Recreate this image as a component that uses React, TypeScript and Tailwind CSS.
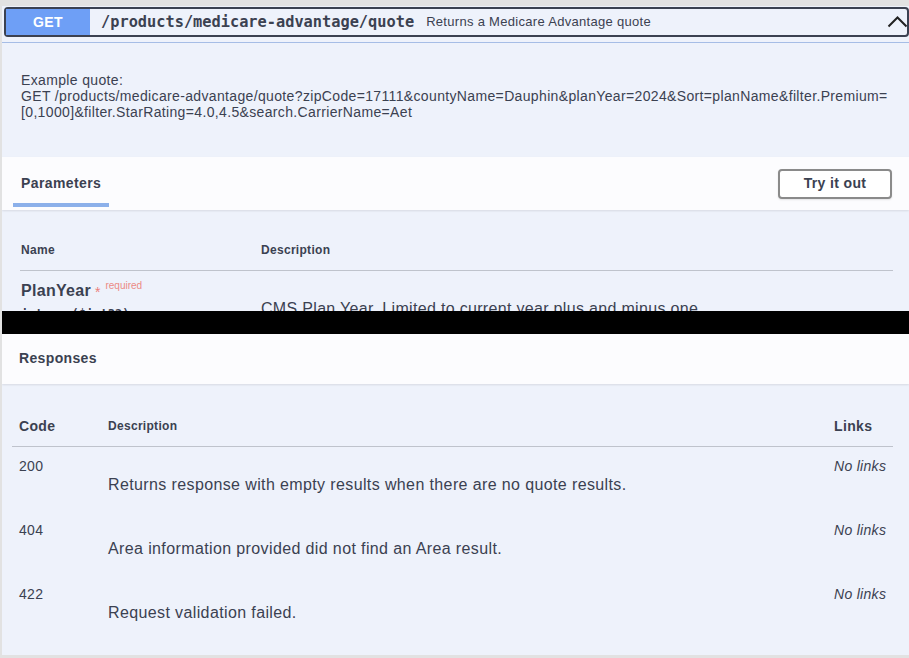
export default function App() {
  const rows = [
    { code: "200", desc: "Returns response with empty results when there are no quote results." },
    { code: "404", desc: "Area information provided did not find an Area result." },
    { code: "422", desc: "Request validation failed." },
  ];
  return (
    <div className="w-[909px] h-[658px] bg-[#e2e2e2] pt-[6px] pl-[2px] overflow-hidden font-['Liberation_Sans',Arial,sans-serif] text-[#3b4151]">
      <div className="h-[649px] bg-[#eef2fb] flex flex-col overflow-hidden">
        {/* summary */}
        <div className="h-[37px] shrink-0 border-b border-[#a6bde6] pt-[1px] pl-[2px]">
          <div className="h-[30px] border-2 border-[#3b4151] rounded-[4px] flex items-stretch">
            <div className="w-[84px] bg-[#6e9ff6] flex items-center justify-center text-white font-bold text-[14px] tracking-[0.4px]">
              GET
            </div>
            <span className="ml-[11px] self-center font-['DejaVu_Sans_Mono',monospace] font-bold text-[15.3px] leading-[18px] text-[#3b4151]">
              /products/medicare-advantage/quote
            </span>
            <span className="ml-[12px] self-center text-[13px] leading-[16px] tracking-[0.3px]">
              Returns a Medicare Advantage quote
            </span>
            <svg className="ml-auto self-center" width="20" height="12" viewBox="0 0 20 12" fill="none">
              <path d="M1.5 10.5 L10.5 1.5 L19.5 10.5" stroke="#222" strokeWidth="2" />
            </svg>
          </div>
        </div>

        {/* description */}
        <div className="h-[114px] shrink-0 pt-[29px] pl-[19px] text-[14px] leading-[16px] tracking-[0.35px]">
          Example quote:
          <br />
          GET /products/medicare-advantage/quote?zipCode=17111&amp;countyName=Dauphin&amp;planYear=2024&amp;Sort=planName&amp;filter.Premium=
          <br />
          [0,1000]&amp;filter.StarRating=4.0,4.5&amp;search.CarrierName=Aet
        </div>

        {/* parameters header */}
        <div className="h-[53px] shrink-0 bg-white/80 shadow-[0_1px_2px_rgba(0,0,0,0.1)] flex items-center justify-between pl-[11px] pr-[17px] relative z-10">
          <div className="h-full flex flex-col">
            <div className="pt-[18px] px-[8px] text-[14px] leading-[16px] font-bold tracking-[0.4px]">Parameters</div>
            <div className="mt-[12px] h-[4px] bg-[#8cb0ea]" />
          </div>
          <button className="w-[114px] h-[30px] border-2 border-[#8a8a8a] rounded-[4px] bg-white font-bold text-[14px] tracking-[0.35px] text-[#3b4151] shadow-[0_1px_2px_rgba(0,0,0,0.1)]">
            Try it out
          </button>
        </div>

        {/* parameters table (cut) */}
        <div className="h-[101px] shrink-0 overflow-hidden ml-[18px] mr-[16px]">
          <div className="h-[61px] border-b border-[#bfc3cc] flex items-end pb-[13px] text-[12px] leading-[14px] font-bold tracking-[0.3px]">
            <div className="w-[241px] pl-[1px]">Name</div>
            <div>Description</div>
          </div>
          <div className="flex">
            <div className="w-[241px] pl-[1px] pt-[11px]">
              <div className="flex items-start">
                <span className="text-[16px] leading-[18px] font-bold tracking-[0.3px]">PlanYear</span>
                <span className="ml-[4px] text-[14px] leading-[16px] text-[#ec7f7b] mt-[2px]">*</span>
                <span className="ml-[5px] text-[10px] leading-[12px] text-[#ec8a85] mt-[-2px]">required</span>
              </div>
              <div className="mt-[7px] font-['DejaVu_Sans_Mono',monospace] text-[12px] leading-[14px] font-semibold">
                integer($int32)
              </div>
            </div>
            <div className="pt-[29px] text-[16px] leading-[18px] tracking-[0.32px]">
              CMS Plan Year. Limited to current year plus and minus one.
            </div>
          </div>
        </div>

        {/* black gap */}
        <div className="h-[23px] shrink-0 bg-black" />

        {/* responses header */}
        <div className="h-[50px] shrink-0 bg-white/80 shadow-[0_1px_2px_rgba(0,0,0,0.1)] flex items-center pl-[17px] pb-[2px] relative z-10">
          <div className="text-[14px] leading-[16px] font-bold tracking-[0.35px]">Responses</div>
        </div>

        {/* responses table */}
        <div className="ml-[10px] mr-[16px]">
          <div className="h-[63px] border-b border-[#bfc3cc] grid grid-cols-[96px_1fr_59px] items-end pb-[12px] font-bold">
            <div className="pl-[7px] text-[14px] leading-[16px] tracking-[0.35px]">Code</div>
            <div className="text-[12px] leading-[14px] tracking-[0.3px] pb-[1px]">Description</div>
            <div className="text-[14px] leading-[16px] tracking-[0.35px]">Links</div>
          </div>
          {rows.map((r) => (
            <div key={r.code} className="h-[64px] grid grid-cols-[96px_1fr_59px]">
              <div className="pl-[7px] pt-[11px] text-[14px] leading-[16px] tracking-[0.3px]">{r.code}</div>
              <div className="pt-[29px] text-[16px] leading-[18px] tracking-[0.38px]">{r.desc}</div>
              <div className="pt-[11px] text-[14px] leading-[16px] italic tracking-[0.3px]">No links</div>
            </div>
          ))}
        </div>
      </div>
    </div>
  );
}
